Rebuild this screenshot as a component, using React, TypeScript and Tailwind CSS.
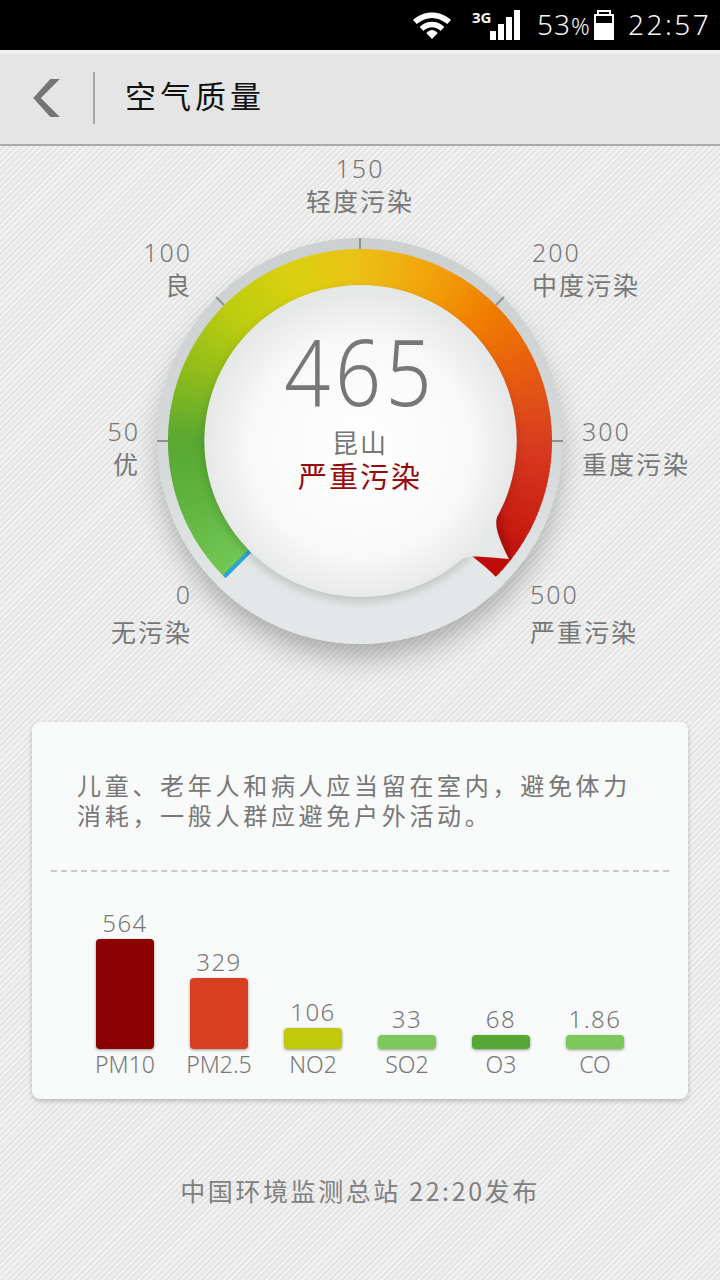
const FONT = "font-['Noto_Sans_CJK_SC','Noto_Sans',sans-serif]";

const bars = [
  { label: "PM10", value: "564", h: 110, color: "bg-[#8b0000]" },
  { label: "PM2.5", value: "329", h: 71, color: "bg-[#d63f20]" },
  { label: "NO2", value: "106", h: 21, color: "bg-[#c2c90a]" },
  { label: "SO2", value: "33", h: 14, color: "bg-[#7cc85a]" },
  { label: "O3", value: "68", h: 14, color: "bg-[#55a834]" },
  { label: "CO", value: "1.86", h: 14, color: "bg-[#7cc85a]" },
];

const stops: [number, number[]][] = [
  [-135, [115, 200, 85]],
  [-110, [96, 180, 62]],
  [-90, [88, 168, 50]],
  [-65, [150, 190, 25]],
  [-45, [188, 205, 15]],
  [-20, [220, 208, 16]],
  [0, [236, 192, 22]],
  [25, [242, 160, 10]],
  [45, [240, 125, 0]],
  [65, [232, 95, 15]],
  [90, [216, 62, 32]],
  [115, [204, 32, 20]],
  [135, [184, 10, 8]],
];

function colorAt(a: number) {
  for (let i = 0; i < stops.length - 1; i++) {
    const [a0, c0] = stops[i];
    const [a1, c1] = stops[i + 1];
    if (a <= a1) {
      const t = (a - a0) / (a1 - a0);
      return `rgb(${c0.map((c, k) => Math.round(c + (c1[k] - c) * t)).join(",")})`;
    }
  }
  return "rgb(184,10,8)";
}

function pt(r: number, deg: number) {
  const rad = (deg * Math.PI) / 180;
  return `${(210 + r * Math.sin(rad)).toFixed(2)} ${(210 - r * Math.cos(rad)).toFixed(2)}`;
}

function Gauge() {
  const segs = [];
  for (let a = -135; a < 135; a += 1.5) {
    const b = Math.min(a + 1.8, 135);
    segs.push(
      <path
        key={a}
        d={`M${pt(192, a)} A192 192 0 0 1 ${pt(192, b)} L${pt(154, b)} A154 154 0 0 0 ${pt(154, a)} Z`}
        fill={colorAt(a + 0.75)}
      />,
    );
  }
  return (
    <svg width="420" height="480" viewBox="0 0 420 480" className="block overflow-visible">
      <defs>
        <radialGradient id="face" cx="50%" cy="52%" r="50%">
          <stop offset="0%" stopColor="#ffffff" />
          <stop offset="70%" stopColor="#f8f8f8" />
          <stop offset="100%" stopColor="#e6e7e7" />
        </radialGradient>
        <linearGradient id="rim" x1="0" y1="0" x2="0" y2="1">
          <stop offset="0%" stopColor="#cdd0d0" />
          <stop offset="55%" stopColor="#d6d9d9" />
          <stop offset="100%" stopColor="#e8ebeb" />
        </linearGradient>
        <filter id="drop" x="-20%" y="-20%" width="140%" height="150%">
          <feGaussianBlur stdDeviation="14" />
        </filter>
        <filter id="soft" x="-10%" y="-10%" width="120%" height="120%">
          <feGaussianBlur stdDeviation="4" />
        </filter>
      </defs>

      <circle cx="210" cy="226" r="200" fill="#000" opacity="0.28" filter="url(#drop)" />
      <circle cx="210" cy="210" r="203" fill="url(#rim)" />
      <path d={`M${pt(203, -135)} A203 203 0 0 0 ${pt(203, 135)} L${pt(150, 135)} A150 150 0 0 1 ${pt(150, -135)} Z`} fill="#e4e7e7" />

      <g stroke="#8f9191" strokeWidth="2">
        <line x1="210" y1="7" x2="210" y2="18" />
        <line x1="7" y1="210" x2="18" y2="210" />
        <line x1="402" y1="210" x2="413" y2="210" />
        <line x1="66" y1="66" x2="74" y2="74" />
        <line x1="354" y1="66" x2="346" y2="74" />
      </g>

      {segs}
      <path d={`M${pt(192, -135)} L${pt(156, -135)}`} stroke="#2aa3d8" strokeWidth="4" />

      <circle cx="210" cy="214" r="157" fill="#000" opacity="0.14" filter="url(#soft)" />
      <path d="M347 286 C344 296 350 310 359 328" fill="none" stroke="#6a0000" strokeWidth="7" opacity="0.45" filter="url(#soft)" />
      <path d="M322 325 L359 328 L345 344 Z" fill="#c00c08" />
      <path
        d="M210 54 A156 156 0 1 0 310 330 C318 324 322 325 359 328 C350 310 344 296 347 286 A156 156 0 0 0 210 54 Z"
        fill="url(#face)"
      />
    </svg>
  );
}

const scale = [
  { n: "150", t: "轻度污染", cls: "left-0 right-0 top-[6px] text-center", sub: "" },
  { n: "100", t: "良", cls: "right-[528px] top-[90px] text-right", sub: "" },
  { n: "200", t: "中度污染", cls: "left-[532px] top-[90px] text-left", sub: "" },
  { n: "50", t: "优", cls: "right-[580px] top-[269px] text-right", sub: "" },
  { n: "300", t: "重度污染", cls: "left-[582px] top-[269px] text-left", sub: "" },
  { n: "0", t: "无污染", cls: "right-[528px] top-[432px] text-right", sub: "mt-[5px]" },
  { n: "500", t: "严重污染", cls: "left-[530px] top-[432px] text-left", sub: "mt-[5px]" },
];

const COMMA = "\uFF0C";

export default function App() {
  return (
    <div
      className={`${FONT} w-[720px] h-[1280px] overflow-hidden flex flex-col bg-[repeating-linear-gradient(135deg,#f1f1f1_0px,#f1f1f1_2px,#e4e4e4_2.3px,#e4e4e4_4px,#f1f1f1_4.3px)]`}
    >
      <div className="h-[50px] shrink-0 bg-black flex items-center pl-[413px] text-[#f4f4f4]">
        <svg width="38" height="28" viewBox="0 0 40 28" className="mr-[21px]" preserveAspectRatio="none">
          <path d="M0 9 C11 -1 29 -1 40 9 L36 13 C26 5 14 5 4 13 Z" fill="#fff" />
          <path d="M7 16 C14 9 26 9 33 16 L29 20 C24 15 16 15 11 20 Z" fill="#fff" />
          <path d="M14 22 C18 18 22 18 26 22 L20 28 Z" fill="#fff" />
        </svg>
        <div className="relative w-[48px] h-[30px] mr-[17px]">
          <span className="absolute left-0 top-[-3px] text-[15px] leading-[20px] font-bold font-['Open_Sans',sans-serif]">3G</span>
          <div className="absolute right-0 bottom-0 flex items-end gap-[2px]">
            <div className="w-[6px] h-[9px] bg-white" />
            <div className="w-[6px] h-[16px] bg-white" />
            <div className="w-[6px] h-[23px] bg-white" />
            <div className="w-[6px] h-[30px] bg-white" />
          </div>
        </div>
        <div className="w-[54px] flex items-baseline whitespace-nowrap pb-[3px] font-light font-['Noto_Sans',sans-serif] leading-none">
          <span className="text-[28px] tracking-[1px]">53</span>
          <span className="text-[23px]">%</span>
        </div>
        <div className="flex flex-col items-center w-[20px] ml-[3px] mr-[14px]">
          <div className="w-[10px] h-[2px] border-2 border-b-0 border-white box-content" />
          <div className="w-[20px] h-[26px] border-2 border-white bg-[linear-gradient(to_bottom,transparent_30%,#fff_30%)]" />
        </div>
        <span className="w-[82px] whitespace-nowrap pb-[3px] text-[28px] leading-none font-light tracking-[2.5px] font-['Noto_Sans',sans-serif]">22:57</span>
      </div>

      <div className="h-[96px] shrink-0 pb-[2px] bg-[#e5e5e5] border-t-[4px] border-t-[#f1f1f1] border-b-2 border-b-[#a9a9a9] flex items-center">
        <svg width="29" height="40" viewBox="0 0 30 42" className="ml-[33px]">
          <path d="M28 1 L8 21 L28 41 L18 41 L0 21 L18 1 Z" fill="#757575" />
        </svg>
        <div className="w-[2px] h-[52px] bg-[#a8a8a8] ml-[31px]" />
        <h1 className="ml-[30px] pb-[8px] text-[31px] leading-none tracking-[4px] font-normal text-[#111]">空气质量</h1>
      </div>

      <div className="relative h-[576px] shrink-0">
        {scale.map((s) => (
          <div key={s.n} className={`absolute ${s.cls} text-[#777] leading-[32px]`}>
            <div className="font-light font-['Noto_Sans',sans-serif] text-[25px] tracking-[2px]">{s.n}</div>
            <div className={`${s.sub} text-[25px] tracking-[2px]`}>{s.t}</div>
          </div>
        ))}
        <div className="absolute left-[150px] top-[85px]">
          <Gauge />
        </div>
        <div className="absolute left-0 right-0 top-[175px] flex flex-col items-center">
          <div className="text-[92px] leading-[100px] tracking-[5px] scale-x-[0.88] text-[#777] font-light font-['Noto_Sans',sans-serif]">465</div>
          <div className="mt-[6px] text-[26px] leading-[30px] tracking-[2px] text-[#777]">昆山</div>
          <div className="mt-[1px] text-[29px] leading-[34px] tracking-[2px] text-[#980a0a]">严重污染</div>
        </div>
      </div>

      <div className="mx-[32px] h-[377px] shrink-0 rounded-lg bg-[#f8f9f9] shadow-[0_2px_4px_rgba(0,0,0,0.22)] flex flex-col">
        <p className="pl-[45px] pt-[48px] text-[24px] leading-[30px] tracking-[3.7px] text-[#777] h-[148px] shrink-0">
          儿童、老年人和病人应当留在室内{COMMA}避免体力
          <br />
          消耗{COMMA}一般人群应避免户外活动。
        </p>
        <div className="mx-[19px] border-t-2 border-dashed border-[#c9c9c9]" />
        <div className="flex items-end pl-[64px] mt-[39px] h-[168px]">
          {bars.map((b) => (
            <div key={b.label} className="w-[94px] flex flex-col items-start">
              <div className="w-[58px] flex justify-center whitespace-nowrap text-[24px] leading-[32px] tracking-[1.5px] font-light text-[#777] font-['Noto_Sans',sans-serif]">
                {b.value}
              </div>
              <div
                className={`w-[58px] rounded-[4px] shadow-[0_1px_3px_rgba(0,0,0,0.4)] ${b.color}`}
                style={{ height: b.h }}
              />
              <div className="w-[58px] flex justify-center whitespace-nowrap text-[23px] leading-[30px] font-light text-[#777] font-['Noto_Sans',sans-serif]">
                {b.label}
              </div>
            </div>
          ))}
        </div>
      </div>

      <div className="mt-[75px] text-center text-[25px] leading-[32px] tracking-[2.6px] text-[#808080]">
        中国环境监测总站 22:20发布
      </div>
    </div>
  );
}
